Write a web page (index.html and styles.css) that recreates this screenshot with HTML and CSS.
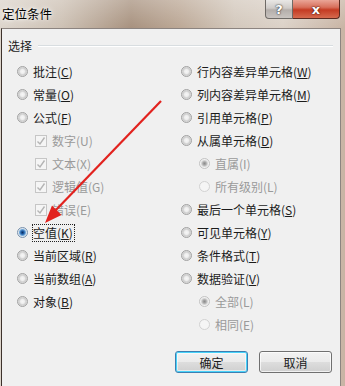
FILE: index.html
```html
<!DOCTYPE html>
<html lang="zh-CN">
  <head>
    <meta charset="UTF-8" />
    <title>定位条件</title>
    <link rel="stylesheet" href="styles.css">
  </head>
  <body>
    <div class="window">
      <div class="titlebar">
        <span class="title">定位条件</span>
        <div class="caption">
          <span class="cap-help">?</span>
          <span class="cap-close">x</span>
        </div>
      </div>

      <div class="client">
        <div class="legend">
          <span>选择</span>
          <span class="rule"></span>
        </div>

        <div class="options">
          <div class="col">
            <div class="row"><span class="radio"></span><span>批注(<u>C</u>)</span></div>
            <div class="row"><span class="radio"></span><span>常量(<u>O</u>)</span></div>
            <div class="row"><span class="radio"></span><span>公式(<u>F</u>)</span></div>
            <div class="row sub disabled"><span class="check"><svg width="10" height="10" viewBox="0 0 10 10"><path d="M1.5 5.5 L4 8 L8.5 1.5" fill="none" stroke="#b4b4b4" stroke-width="1.4"/></svg></span><span>数字(U)</span></div>
            <div class="row sub disabled"><span class="check"><svg width="10" height="10" viewBox="0 0 10 10"><path d="M1.5 5.5 L4 8 L8.5 1.5" fill="none" stroke="#b4b4b4" stroke-width="1.4"/></svg></span><span>文本(X)</span></div>
            <div class="row sub disabled"><span class="check"><svg width="10" height="10" viewBox="0 0 10 10"><path d="M1.5 5.5 L4 8 L8.5 1.5" fill="none" stroke="#b4b4b4" stroke-width="1.4"/></svg></span><span>逻辑值(G)</span></div>
            <div class="row sub disabled"><span class="check"><svg width="10" height="10" viewBox="0 0 10 10"><path d="M1.5 5.5 L4 8 L8.5 1.5" fill="none" stroke="#b4b4b4" stroke-width="1.4"/></svg></span><span>错误(E)</span></div>
            <div class="row"><span class="radio on"></span><span class="focus">空值(<u>K</u>)</span></div>
            <div class="row"><span class="radio"></span><span>当前区域(<u>R</u>)</span></div>
            <div class="row"><span class="radio"></span><span>当前数组(<u>A</u>)</span></div>
            <div class="row"><span class="radio"></span><span>对象(<u>B</u>)</span></div>
          </div>

          <div class="col">
            <div class="row"><span class="radio"></span><span>行内容差异单元格(<u>W</u>)</span></div>
            <div class="row"><span class="radio"></span><span>列内容差异单元格(<u>M</u>)</span></div>
            <div class="row"><span class="radio"></span><span>引用单元格(<u>P</u>)</span></div>
            <div class="row"><span class="radio"></span><span>从属单元格(<u>D</u>)</span></div>
            <div class="row sub disabled"><span class="radio dis-on"></span><span>直属(I)</span></div>
            <div class="row sub disabled"><span class="radio dis"></span><span>所有级别(L)</span></div>
            <div class="row"><span class="radio"></span><span>最后一个单元格(<u>S</u>)</span></div>
            <div class="row"><span class="radio"></span><span>可见单元格(<u>Y</u>)</span></div>
            <div class="row"><span class="radio"></span><span>条件格式(<u>T</u>)</span></div>
            <div class="row"><span class="radio"></span><span>数据验证(<u>V</u>)</span></div>
            <div class="row sub disabled"><span class="radio dis-on"></span><span>全部(L)</span></div>
            <div class="row sub disabled"><span class="radio dis"></span><span>相同(E)</span></div>
          </div>
        </div>

        <div class="actions">
          <button class="btn default">确定</button>
          <button class="btn">取消</button>
        </div>
      </div>

      <!-- red annotation arrow drawn over the dialog -->
      <svg class="arrow" width="345" height="386" viewBox="0 0 345 386">
        <line x1="161" y1="101" x2="54" y2="212" stroke="#e2221e" stroke-width="2.2"/>
        <polygon points="45,223 61.5,215 52,205.5" fill="#e2221e"/>
      </svg>
    </div>
  </body>
</html>
```

FILE: styles.css
```css
* {
    margin: 0;
    padding: 0;
    box-sizing: border-box;
}

body {
    width: 345px;
    height: 386px;
    overflow: hidden;
    font-family: "Noto Sans CJK SC", "Microsoft YaHei", sans-serif;
    font-size: 12px;
    color: #1b1b1b;
}

.window {
    position: relative;
    width: 345px;
    height: 386px;
    background: linear-gradient(90deg, #ddd5cc 0%, #cdc1b4 18%, #a8927f 38%, #bca896 52%, #d3c8bc 68%, #dcd2c8 82%, #c8b4a4 100%);
    display: flex;
    flex-direction: column;
}

.titlebar {
    height: 28px;
    display: flex;
    justify-content: space-between;
    align-items: flex-start;
    background: linear-gradient(180deg, rgba(255,255,255,0.25) 0%, rgba(255,255,255,0) 100%);
}

.title {
    padding: 5px 0 0 2px;
    font-size: 12.5px;
    line-height: 18px;
    color: #000;
    text-shadow: 0 0 6px rgba(255, 255, 255, 0.9), 0 0 3px rgba(255, 255, 255, 0.9);
}

.caption {
    display: flex;
    margin-right: 5px;
}

.caption span {
    height: 19px;
    display: flex;
    align-items: center;
    justify-content: center;
    font-family: "DejaVu Sans", sans-serif;
    font-weight: bold;
    color: #fff;
}

.cap-help {
    width: 28px;
    border: 1px solid #6e6a66;
    border-top: none;
    border-bottom-left-radius: 4px;
    background: linear-gradient(180deg, #e9e7e5 0%, #cfcbc8 45%, #b4aeaa 55%, #c9c4c0 100%);
    font-size: 13px;
    text-shadow: 0 0 2px #333, 0 0 1px #333;
}

.cap-close {
    width: 47px;
    border: 1px solid #5c2a20;
    border-top: none;
    border-left: none;
    border-bottom-right-radius: 4px;
    background: linear-gradient(180deg, #eaa597 0%, #d8705c 40%, #c43b23 55%, #d66a4e 100%);
    font-size: 13px;
    text-shadow: 0 0 2px #4a1208, 0 0 1px #4a1208;
}

.client {
    flex: 1;
    margin: 0 4px 0 1px;
    background: #f0f0f0;
    border: 1px solid #8c8480;
    border-left-color: #3d322c;
    border-bottom: none;
    display: flex;
    flex-direction: column;
}

.legend {
    display: flex;
    align-items: center;
    height: 16px;
    margin: 8px 7px 0 6px;
}

.legend .rule {
    flex: 1;
    height: 1px;
    margin-left: 6px;
    background: #d8dde0;
    box-shadow: 0 1px 0 #fff;
}

.options {
    display: grid;
    grid-template-columns: 164px 1fr;
    align-items: start;
    margin-top: 7px;
    padding-left: 15px;
}

.row {
    height: 23px;
    display: flex;
    align-items: center;
    gap: 5px;
    white-space: nowrap;
}

.row.sub {
    padding-left: 18px;
}

.row.disabled {
    color: #9a9a9a;
}

u {
    text-decoration: underline;
    text-underline-offset: 1px;
}

.radio {
    width: 11px;
    height: 11px;
    border-radius: 50%;
    border: 1px solid #a2a2a2;
    background: radial-gradient(circle, #f6f6f6 0, #eeeeee 2px, #cdcdcd 3.5px, #e6e6e6 5px);
    flex: none;
}

.radio.on {
    border-color: #7891ad;
    background: radial-gradient(circle, #0c2c5c 0, #1f5ea8 1.6px, #6fa6d8 3px, #dbe6ef 4px, #e9edf1 5px);
}

.radio.dis-on {
    border-color: #c3c3c3;
    background: radial-gradient(circle, #8c8c8c 0, #a8a8a8 1.6px, #d4d4d4 3px, #f2f2f2 4px);
}

.radio.dis {
    border-color: #d2d2d2;
    background: #f5f5f5;
}

.check {
    width: 12px;
    height: 12px;
    border: 1px solid #c6c6c6;
    background: #f5f5f5;
    display: flex;
    align-items: center;
    justify-content: center;
    flex: none;
}

.focus {
    border: 1px dotted #222;
    line-height: 16px;
    padding: 0 1px 0 0;
    margin-left: -1px;
}

.actions {
    display: flex;
    justify-content: flex-end;
    gap: 11px;
    margin-top: 15px;
    padding-right: 8px;
}

.btn {
    width: 73px;
    height: 22px;
    font-family: inherit;
    font-size: 12px;
    color: #1b1b1b;
    border: 1px solid #707070;
    border-radius: 3px;
    background: linear-gradient(180deg, #f2f2f2 0%, #ebebeb 48%, #dddddd 52%, #cfcfcf 100%);
    box-shadow: inset 0 0 0 1px rgba(255, 255, 255, 0.7);
}

.btn.default {
    border-color: #3c7fb1;
    box-shadow: inset 0 0 0 1px #48d3fa, inset 0 0 0 2px rgba(255, 255, 255, 0.5);
}

.arrow {
    position: absolute;
    left: 0;
    top: 0;
    pointer-events: none;
}
```
